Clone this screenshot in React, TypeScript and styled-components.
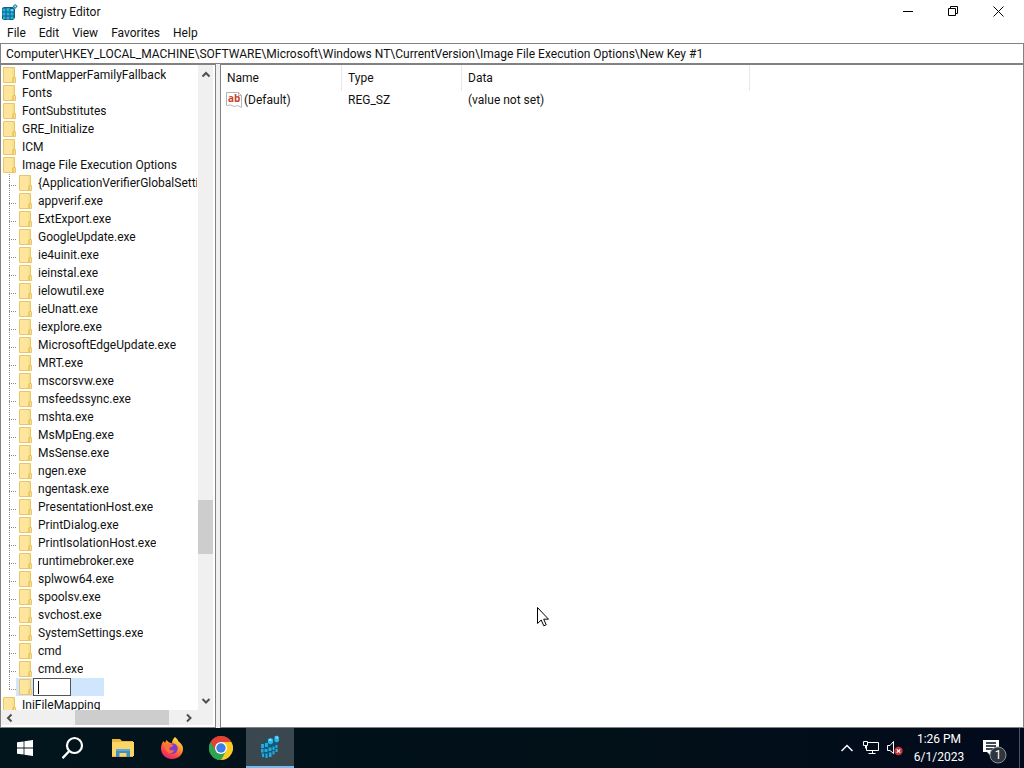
import React from "react";
import styled, { createGlobalStyle } from "styled-components";

const GlobalStyle = createGlobalStyle`
  *, *::before, *::after { box-sizing: border-box; }
  body {
    margin: 0;
    font: 12px/18px Roboto, "Open Sans", sans-serif;
    color: #111;
    background: #fff;
  }
  button, input { font: inherit; color: inherit; }
  button { border: 0; padding: 0; background: none; }
`;

const Desktop = styled.div`
  display: flex;
  flex-direction: column;
  height: 100vh;
  overflow: hidden;
`;

const Window = styled.main`
  flex: 1;
  min-height: 0;
  display: flex;
  flex-direction: column;
  background: #fff;
`;

const TitleBar = styled.header`
  display: flex;
  align-items: center;
  height: 23px;
  padding-left: 2px;
`;

const Title = styled.h1`
  flex: 1;
  margin: 0 0 0 5px;
  font-size: 12px;
  font-weight: 400;
`;

const CaptionButton = styled.button`
  display: flex;
  justify-content: center;
  width: 45px;
  height: 21px;
  align-items: center;
`;

const CaptionButtons = styled.div`
  display: flex;
  padding-right: 3px;
`;

const MenuBar = styled.nav`
  display: flex;
  gap: 13px;
  height: 20px;
  padding-left: 7px;
`;

const MenuButton = styled.button`
  line-height: 20px;
`;

const AddressBox = styled.input`
  width: 100%;
  height: 21px;
  padding: 0 5px;
  border: 1px solid #828282;
  outline: 0;
  border-radius: 0;
  background: #fff;
`;

const Panes = styled.div`
  flex: 1;
  min-height: 0;
  display: flex;
  gap: 4px;
  background: #f0f0f0;
`;

const TreePane = styled.section`
  display: grid;
  grid-template: minmax(0, 1fr) 15px / minmax(0, 1fr) 15px;
  width: 216px;
  padding: 0 2px 2px 0;
  border: 1px solid #828282;
  background: #fff;
`;

const TreeView = styled.ul`
  margin: 0;
  padding: 1px 1px 0 0;
  overflow: hidden;
  list-style: none;
`;

const SubTree = styled.ul`
  margin: 0;
  padding: 0;
  list-style: none;
`;

const TreeItem = styled.li`
  white-space: nowrap;
`;

const TreeRow = styled.div`
  display: flex;
  align-items: center;
  height: 18px;
  padding-left: 2px;

  svg { flex: none; }
`;

const TreeLabel = styled.span`
  padding-left: 5px;
  overflow: hidden;
`;

const Guide = styled.span<{ $last?: boolean }>`
  flex: none;
  width: 13px;
  height: 18px;
  background:
    repeating-linear-gradient(#8c8c8c 0 1px, transparent 1px 2px) 6px 0 / 1px ${(p) => (p.$last ? "12px" : "18px")} no-repeat,
    repeating-linear-gradient(90deg, #8c8c8c 0 1px, transparent 1px 2px) 6px 11px / 7px 1px no-repeat;
`;

const Node = styled.span<{ $selected?: boolean }>`
  display: flex;
  align-items: center;
  min-width: 0;
  width: ${(p) => (p.$selected ? "88px" : "auto")};
  height: 18px;
  padding-left: 3px;
  background: ${(p) => (p.$selected ? "#cfe6fd" : "none")};
`;

const RenameBox = styled.input`
  width: 38px;
  height: 18px;
  padding: 0 3px;
  border: 1px solid #555;
  border-radius: 0;
  outline: 0;
  background: linear-gradient(#000, #000) 4px 2px / 1px 13px no-repeat #fff;
  caret-color: transparent;
`;

const ScrollTrack = styled.div<{ $horizontal?: boolean }>`
  display: flex;
  flex-direction: ${(p) => (p.$horizontal ? "row" : "column")};
  padding: ${(p) => (p.$horizontal ? "0 2px 0 1px" : "2px 0")};
  background: #f0f0f0;
`;

const ScrollSpace = styled.div<{ $grow: number }>`
  flex: ${(p) => p.$grow} 0 0;
`;

const ScrollThumb = styled.div<{ $grow: number }>`
  flex: ${(p) => p.$grow} 0 0;
  background: #cdcdcd;
`;

const ScrollButton = styled.button`
  display: flex;
  align-items: center;
  justify-content: center;
  width: 15px;
  height: 15px;
`;

const Corner = styled.div`
  background: #f0f0f0;
`;

const ListPane = styled.section`
  flex: 1;
  min-width: 0;
  border: 1px solid #828282;
  background: #fff;
`;

const ValueTable = styled.table`
  border-collapse: separate;
  border-spacing: 0;
  table-layout: fixed;
  width: 529px;
`;

const HeadCell = styled.th<{ $width: number }>`
  width: ${(p) => p.$width}px;
  height: 26px;
  padding: 0 6px;
  border-right: 1px solid #e8e8e8;
  font-weight: 400;
  text-align: left;
`;

const Cell = styled.td`
  height: 18px;
  padding: 0 6px;
`;

const ValueName = styled.span`
  display: flex;
  align-items: center;
  gap: 2px;
  margin-left: -1px;
`;

const TaskBar = styled.footer`
  display: flex;
  justify-content: space-between;
  height: 40px;
  color: #fff;
  background: linear-gradient(90deg, #02141c, #021018 60%, #020a1c);
`;

const TaskGroup = styled.div`
  display: flex;
  align-items: center;
`;

const TaskButton = styled.button<{ $active?: boolean }>`
  display: flex;
  align-items: center;
  justify-content: center;
  width: ${(p) => (p.$active ? "48px" : "49px")};
  height: 40px;
  margin-left: ${(p) => (p.$active ? "1px" : "0")};
  background: ${(p) => (p.$active ? "#3a474e" : "none")};
  border-bottom: ${(p) => (p.$active ? "2px solid #76b9ed" : "0")};
`;

const TrayButton = styled.button<{ $width: number }>`
  display: flex;
  align-items: center;
  justify-content: center;
  width: ${(p) => p.$width}px;
  height: 40px;
`;

const Clock = styled.time`
  width: 64px;
  text-align: center;
`;

const ShowDesktop = styled.button`
  width: 5px;
  height: 40px;
  border-left: 1px solid #4a5361;
`;

const Cursor = styled.svg`
  position: absolute;
  left: 537px;
  top: 607px;
  pointer-events: none;
`;

const FolderIcon = () => (
  <svg width="14" height="16" viewBox="0 0 14 16" aria-hidden="true">
    <path d="M0.500 0.500h11v9l1 1.500v4.500h-12z" fill="#fbe08a" stroke="#e8c669" />
    <path d="M1 1h8v14H1z" fill="#fde69b" />
    <path d="M10 15V11.500L11.500 9.500" fill="none" stroke="#d9b24c" />
  </svg>
);

const RegeditIcon = () => (
  <svg width="16" height="16" viewBox="0 0 16 16" aria-hidden="true">
    <path d="M0 4l2-1h9l2 2v9l-2 2H2l-2-1z" fill="#11607f" />
    <path d="M0.500 4.500h3V7.500h-3zM4.500 4h3v3.500h-3zM0.500 8.500h3v3h-3zM4.500 8.500h3v3h-3zM8.500 8.500h3v3h-3zM1 12.500h2.500v2.500H1zM4.500 12.500h3v3h-3zM8.500 12.500h3V15h-3z" fill="#2bb0df" />
    <path d="M8.500 5h3v2.500h-3z" fill="#68d2f3" />
    <path d="M13.200 0l2.600 2.300-2.600 2.600-2.600-2.600z" fill="#2c86a9" />
    <path d="M13.200 1.200l1.200 1.100-1.200 1.200-1.200-1.200z" fill="#a4e6fa" />
  </svg>
);

const TaskRegeditIcon = () => (
  <svg width="20" height="24" viewBox="0 0 20 24" aria-hidden="true">
    <path d="M1 9l4-2 3-4 4 1 3-3 4 1v4l-2 2v8l-4 3-3 3-7 1-2-4z" fill="#0e5b7a" />
    <path d="M1 9h3v4H1zM5 8h3v4H5zM1 14h2.500v3.500H1zM4.500 14h3v3h-3zM8.500 12.500h3V16h-3zM2 18.500h2V22H2zM5.500 18.500h2V23h-2zM9 17.500h2.500V22H9zM12.500 16h2v3.500h-2zM12.500 11.500h2V15h-2zM15.500 10h2v3h-2zM15.500 14h2v3h-2z" fill="#2ba8da" />
    <path d="M8 4l2.500-1L13 4v4l-2.500 1.500L8 8zM14.500 1.500L17 0.500l2 1.500v4l-2 1.500-2.500-1z" fill="#2fb6e6" />
    <path d="M9 4h2.500v2H9zM15.500 1.500h2.500v2h-2.500z" fill="#7fdcf8" />
  </svg>
);

const StringIcon = () => (
  <svg width="16" height="16" viewBox="0 0 16 16" aria-hidden="true">
    <path d="M0.500 0.500h12l3 3v12l-4-2-3 1-4-1.500-4 .5z" fill="#fff" stroke="#b5b5b5" />
    <path d="M12.500 0.500v3h3" fill="none" stroke="#b5b5b5" />
    <text x="2" y="10" fontFamily="Open Sans, sans-serif" fontSize="10" fontWeight="700" fill="#c9412c">ab</text>
  </svg>
);

const chevrons = {
  up: "M1.500 6.500L5 3l3.500 3.500",
  down: "M1.500 3L5 6.500 8.500 3",
  left: "M6.500 1.500L3 5l3.500 3.500",
  right: "M3 1.500L6.500 5 3 8.500",
};

const Chevron = ({ to }: { to: keyof typeof chevrons }) => (
  <svg width="10" height="10" viewBox="0 0 10 10" aria-hidden="true">
    <path d={chevrons[to]} fill="none" stroke="#505050" strokeWidth="2" />
  </svg>
);

const topKeys = ["FontMapperFamilyFallback", "Fonts", "FontSubstitutes", "GRE_Initialize", "ICM"];

const imageKeys = [
  "{ApplicationVerifierGlobalSetti",
  "appverif.exe",
  "ExtExport.exe",
  "GoogleUpdate.exe",
  "ie4uinit.exe",
  "ieinstal.exe",
  "ielowutil.exe",
  "ieUnatt.exe",
  "iexplore.exe",
  "MicrosoftEdgeUpdate.exe",
  "MRT.exe",
  "mscorsvw.exe",
  "msfeedssync.exe",
  "mshta.exe",
  "MsMpEng.exe",
  "MsSense.exe",
  "ngen.exe",
  "ngentask.exe",
  "PresentationHost.exe",
  "PrintDialog.exe",
  "PrintIsolationHost.exe",
  "runtimebroker.exe",
  "splwow64.exe",
  "spoolsv.exe",
  "svchost.exe",
  "SystemSettings.exe",
  "cmd",
  "cmd.exe",
];

const Key = ({ name, children }: { name: string; children?: React.ReactNode }) => (
  <TreeItem>
    <TreeRow>
      <FolderIcon />
      <TreeLabel>{name}</TreeLabel>
    </TreeRow>
    {children}
  </TreeItem>
);

const KeyTree = () => (
  <TreeView aria-label="Registry keys">
    {topKeys.map((name) => (
      <Key key={name} name={name} />
    ))}
    <Key name="Image File Execution Options">
      <SubTree>
        {imageKeys.map((name) => (
          <TreeItem key={name}>
            <TreeRow>
              <Guide />
              <Node>
                <FolderIcon />
                <TreeLabel>{name}</TreeLabel>
              </Node>
            </TreeRow>
          </TreeItem>
        ))}
        <TreeItem>
          <TreeRow>
            <Guide $last />
            <Node $selected>
              <FolderIcon />
              <RenameBox aria-label="Key name" />
            </Node>
          </TreeRow>
        </TreeItem>
      </SubTree>
    </Key>
    <Key name="IniFileMapping" />
  </TreeView>
);

const NotificationIcon = () => (
  <svg width="26" height="32" viewBox="0 0 26 32" aria-hidden="true">
    <path d="M1 8h16v12H9v4l-4-4H1z" fill="#fff" />
    <path d="M4 11h10M4 14h10M4 17h8" stroke="#04101e" strokeWidth="1.300" />
    <circle cx="16" cy="23" r="8" fill="#30363d" stroke="#8c9298" />
    <text x="16" y="27" textAnchor="middle" fontSize="12" fill="#fff">1</text>
  </svg>
);

export default function App() {
  return (
    <Desktop>
      <GlobalStyle />
      <Window>
        <TitleBar>
          <RegeditIcon />
          <Title>Registry Editor</Title>
          <CaptionButtons>
            <CaptionButton aria-label="Minimize">
              <svg width="11" height="11"><path d="M0 5.500h10" stroke="#000" /></svg>
            </CaptionButton>
            <CaptionButton aria-label="Restore">
              <svg width="11" height="11"><path d="M0.500 2.500h7v7h-7zM2.500 2.500v-2h7v7h-2" fill="none" stroke="#000" /></svg>
            </CaptionButton>
            <CaptionButton aria-label="Close">
              <svg width="11" height="11"><path d="M0.500 0.500l10 10M10.500 0.500l-10 10" stroke="#000" /></svg>
            </CaptionButton>
          </CaptionButtons>
        </TitleBar>
        <MenuBar>
          {["File", "Edit", "View", "Favorites", "Help"].map((item) => (
            <MenuButton key={item}>{item}</MenuButton>
          ))}
        </MenuBar>
        <AddressBox
          aria-label="Address"
          defaultValue="Computer\HKEY_LOCAL_MACHINE\SOFTWARE\Microsoft\Windows NT\CurrentVersion\Image File Execution Options\New Key #1"
        />
        <Panes>
          <TreePane>
            <KeyTree />
            <ScrollTrack>
              <ScrollButton aria-label="Scroll up"><Chevron to="up" /></ScrollButton>
              <ScrollSpace $grow={418} />
              <ScrollThumb $grow={54} />
              <ScrollSpace $grow={139} />
              <ScrollButton aria-label="Scroll down"><Chevron to="down" /></ScrollButton>
            </ScrollTrack>
            <ScrollTrack $horizontal>
              <ScrollButton aria-label="Scroll left"><Chevron to="left" /></ScrollButton>
              <ScrollSpace $grow={58} />
              <ScrollThumb $grow={94} />
              <ScrollSpace $grow={12} />
              <ScrollButton aria-label="Scroll right"><Chevron to="right" /></ScrollButton>
            </ScrollTrack>
            <Corner />
          </TreePane>
          <ListPane>
            <ValueTable>
              <thead>
                <tr>
                  <HeadCell $width={121}>Name</HeadCell>
                  <HeadCell $width={120}>Type</HeadCell>
                  <HeadCell $width={288}>Data</HeadCell>
                </tr>
              </thead>
              <tbody>
                <tr>
                  <Cell><ValueName><StringIcon />(Default)</ValueName></Cell>
                  <Cell>REG_SZ</Cell>
                  <Cell>(value not set)</Cell>
                </tr>
              </tbody>
            </ValueTable>
          </ListPane>
        </Panes>
      </Window>
      <TaskBar>
        <TaskGroup>
          <TaskButton aria-label="Start">
            <svg width="16" height="16" viewBox="0 0 16 16"><path d="M0 2.300l6.600-.9v6.200H0zM7.400 1.300L16 0v7.600H7.400zM0 8.400h6.600v6.200L0 13.700zM7.400 8.400H16V16l-8.600-1.300z" fill="#fff" /></svg>
          </TaskButton>
          <TaskButton aria-label="Search">
            <svg width="24" height="24" viewBox="0 0 24 24"><circle cx="12.500" cy="9.500" r="7.500" fill="none" stroke="#fff" strokeWidth="2.200" /><path d="M7.300 15L0.500 22.300" stroke="#fff" strokeWidth="2.400" /></svg>
          </TaskButton>
          <TaskButton aria-label="File Explorer">
            <svg width="22" height="20" viewBox="0 0 22 20">
              <path d="M0 1h8l2 2h11v16H0z" fill="#eeb63c" />
              <path d="M0 4h22v14H0z" fill="#fbd667" />
              <path d="M4 11h14v8h-3.500v-4h-7v4H4z" fill="#3d8fc4" />
              <path d="M4 11h14v2H4z" fill="#5aa9d8" />
            </svg>
          </TaskButton>
          <TaskButton aria-label="Firefox">
            <svg width="24" height="24" viewBox="0 0 24 24">
              <defs>
                <linearGradient id="fox" x1="0.800" y1="0" x2="0.250" y2="1">
                  <stop offset="0" stopColor="#fff04a" />
                  <stop offset="0.350" stopColor="#ffa02c" />
                  <stop offset="0.700" stopColor="#ff4a42" />
                  <stop offset="1" stopColor="#e2207c" />
                </linearGradient>
              </defs>
              <path d="M15 1c2 1.500 3 3 3.500 4.500 3 2 5 5 4.500 8.500-.6 5-5 9-11 9S1 18.500 1 12.500c0-3 1-5.500 2.500-7.500L5 7l1.500-3L9 6.500c1 0 2 .2 3 .7C12.200 4.500 13.200 2.500 15 1z" fill="url(#fox)" />
              <circle cx="12.500" cy="12.500" r="5.200" fill="#7a3fd0" />
              <path d="M5 8c2-1 4-1 6 0l2.500 1.200-2 1.800c-2 .2-2.500 1.500-2 2.500 1.500 1.500 3.500 1 4.500.2 0 2.500-2.500 4-5 3.500C6.500 16.500 4.500 12 5 8z" fill="#ff6f36" />
            </svg>
          </TaskButton>
          <TaskButton aria-label="Chrome">
            <svg width="24" height="24" viewBox="0 0 24 24">
              <path d="M12 12L1.600 6A12 12 0 0 1 22.400 6z" fill="#e24234" />
              <path d="M12 12L22.400 6A12 12 0 0 1 12 24z" fill="#f9cb23" />
              <path d="M12 12V24A12 12 0 0 1 1.600 6z" fill="#2fa350" />
              <path d="M12 6h10.400L17.200 15 12 24z" fill="#f9cb23" />
              <path d="M1.600 6l5.200 9 5.200 3 5.200-3L12 24A12 12 0 0 1 1.600 6z" fill="#2fa350" />
              <path d="M1.600 6A12 12 0 0 1 22.400 6H12L6.800 15z" fill="#e24234" />
              <circle cx="12" cy="12" r="6" fill="#fff" />
              <circle cx="12" cy="12" r="4.700" fill="#3c7fe8" />
            </svg>
          </TaskButton>
          <TaskButton $active aria-label="Registry Editor">
            <TaskRegeditIcon />
          </TaskButton>
        </TaskGroup>
        <TaskGroup>
          <TrayButton $width={24} aria-label="Show hidden icons">
            <svg width="12" height="8"><path d="M0.500 7L6 1.500 11.500 7" fill="none" stroke="#fff" strokeWidth="1.500" /></svg>
          </TrayButton>
          <TrayButton $width={24} aria-label="Network">
            <svg width="16" height="14" viewBox="0 0 16 14"><path d="M5 1.500h10.500v8H3.500V5M9.500 9.500v3M5.500 12.500h7M0.500 0.500h4v4h-4zM2.500 4.500v3" fill="none" stroke="#fff" /></svg>
          </TrayButton>
          <TrayButton $width={24} aria-label="Volume muted">
            <svg width="16" height="16" viewBox="0 0 16 16">
              <path d="M0.500 5.500h2.500l3.500-4v12L3 10.500H0.500z" fill="none" stroke="#fff" />
              <circle cx="11.500" cy="11" r="4.200" fill="#c9353a" />
              <path d="M9.800 9.300l3.400 3.400M13.200 9.300l-3.400 3.400" stroke="#fff" strokeWidth="1.200" />
            </svg>
          </TrayButton>
          <Clock>1:26 PM<br />6/1/2023</Clock>
          <TrayButton $width={48} aria-label="Notifications"><NotificationIcon /></TrayButton>
          <ShowDesktop aria-label="Show desktop" />
        </TaskGroup>
      </TaskBar>
      <Cursor width="12" height="20" viewBox="0 0 12 20" aria-hidden="true">
        <path d="M0.500 0.500v16l3.700-3.500 2.600 5.800 2.400-1-2.500-5.600h4.800z" fill="#fff" stroke="#000" />
      </Cursor>
    </Desktop>
  );
}
